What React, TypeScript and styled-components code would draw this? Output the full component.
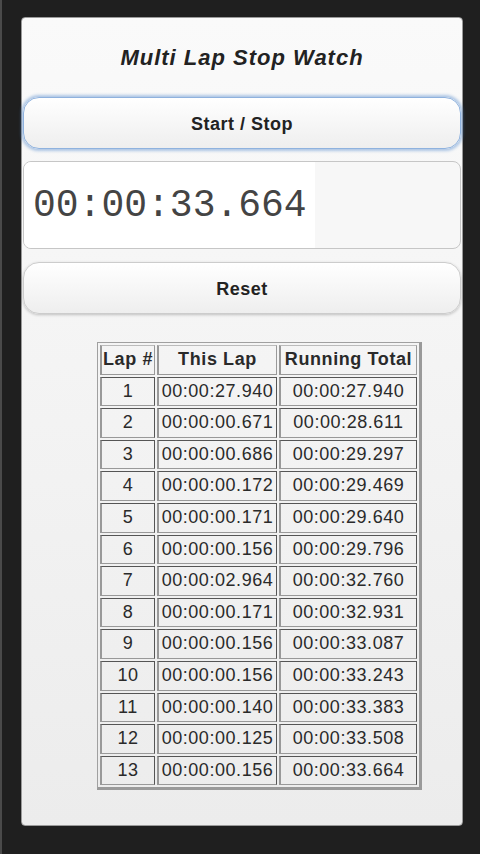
import React from 'react'
import styled, { createGlobalStyle } from 'styled-components'

const GlobalStyle = createGlobalStyle`
  html, body {
    margin: 0;
    padding: 0;
    height: 854px;
    background: #1f1f1f;
    overflow: hidden;
  }
  body {
    box-shadow: inset 2px 0 0 #4a4a4a;
    font-family: "Liberation Sans", Arial, sans-serif;
  }
  * {
    box-sizing: border-box;
  }
`

const laps = [
  { lap: 1, split: '00:00:27.940', total: '00:00:27.940' },
  { lap: 2, split: '00:00:00.671', total: '00:00:28.611' },
  { lap: 3, split: '00:00:00.686', total: '00:00:29.297' },
  { lap: 4, split: '00:00:00.172', total: '00:00:29.469' },
  { lap: 5, split: '00:00:00.171', total: '00:00:29.640' },
  { lap: 6, split: '00:00:00.156', total: '00:00:29.796' },
  { lap: 7, split: '00:00:02.964', total: '00:00:32.760' },
  { lap: 8, split: '00:00:00.171', total: '00:00:32.931' },
  { lap: 9, split: '00:00:00.156', total: '00:00:33.087' },
  { lap: 10, split: '00:00:00.156', total: '00:00:33.243' },
  { lap: 11, split: '00:00:00.140', total: '00:00:33.383' },
  { lap: 12, split: '00:00:00.125', total: '00:00:33.508' },
  { lap: 13, split: '00:00:00.156', total: '00:00:33.664' },
]

const App = () => {
  const rows = laps.map((item) => {
    return (
      <tr key={item.lap}>
        <Cell>{item.lap}</Cell>
        <Cell>{item.split}</Cell>
        <Cell>{item.total}</Cell>
      </tr>
    )
  })

  return (
    <>
      <GlobalStyle />
      <Panel>
        <Title>Multi Lap Stop Watch</Title>
        <Button $focused>Start / Stop</Button>
        <Display>
          <TimeField readOnly value="00:00:33.664" />
        </Display>
        <Button>Reset</Button>
        <LapTable>
          <colgroup>
            <col style={{ width: 55 }} />
            <col style={{ width: 120 }} />
            <col style={{ width: 138 }} />
          </colgroup>
          <thead>
            <tr>
              <HeadCell>Lap #</HeadCell>
              <HeadCell>This Lap</HeadCell>
              <HeadCell>Running Total</HeadCell>
            </tr>
          </thead>
          <tbody>{rows}</tbody>
        </LapTable>
      </Panel>
    </>
  )
}

const Panel = styled.div`
  margin: 17px 17px 0 21px;
  height: 809px;
  padding: 0 1px;
  border: 1px solid #9a9a9a;
  border-radius: 4px;
  background: linear-gradient(#fafafa, #ececec);
  display: flex;
  flex-direction: column;
`

const Title = styled.h1`
  margin: 0;
  padding: 28px 0 27px;
  font-size: 22px;
  line-height: 24px;
  font-weight: bold;
  font-style: italic;
  letter-spacing: 1px;
  text-align: center;
  color: #222;
`

const Button = styled.button<{ $focused?: boolean }>`
  display: block;
  width: 100%;
  height: 52px;
  margin: 0 0 12px;
  padding: 2px 0 0;
  border: 1px solid ${({ $focused }) => ($focused ? '#8fb2de' : '#cccccc')};
  border-radius: 16px;
  background: linear-gradient(#ffffff, #eeeeee);
  box-shadow: ${({ $focused }) =>
    $focused
      ? '0 0 3px 2px rgba(80, 135, 205, 0.45)'
      : '0 1px 3px rgba(0, 0, 0, 0.22)'};
  font-family: "Liberation Sans", Arial, sans-serif;
  font-size: 18px;
  font-weight: bold;
  color: #222;
  letter-spacing: 0.5px;
  outline: none;
`

const Display = styled.div`
  height: 88px;
  margin: 0 0 13px;
  border: 1px solid #c6c6c6;
  border-radius: 8px;
  background: #f7f7f7;
  overflow: hidden;
  display: flex;
`

const TimeField = styled.input`
  width: 291px;
  height: 100%;
  border: none;
  padding: 0 0 0 9px;
  background: #ffffff;
  font-family: "Liberation Mono", "Courier New", monospace;
  font-size: 38px;
  color: #444;
  outline: none;
`

const LapTable = styled.table`
  width: 319px;
  margin: 16px 0 0 74px;
  border-collapse: separate;
  border-spacing: 2px;
  table-layout: fixed;
  border-style: solid;
  border-color: #a0a0a0 #9a9a9a #9a9a9a #a0a0a0;
  border-width: 1px 3px 3px 1px;
  font-family: "Liberation Sans", Arial, sans-serif;
  font-size: 18px;
  color: #2a2a2a;
`

const Cell = styled.td`
  padding: 0;
  height: 29.6px;
  line-height: 27.6px;
  text-align: center;
  letter-spacing: 0.55px;
  white-space: nowrap;
  overflow: visible;
  border-style: solid;
  border-width: 1px 1px 1px 2px;
  border-color: #555 #555 #999 #999;
`

const HeadCell = styled.th`
  padding: 0;
  height: 29.6px;
  line-height: 27.6px;
  text-align: center;
  font-weight: bold;
  letter-spacing: 0.6px;
  white-space: nowrap;
  border-style: solid;
  border-width: 1px 1px 1px 2px;
  border-color: #bbb #999 #999 #999;
`

export default App
